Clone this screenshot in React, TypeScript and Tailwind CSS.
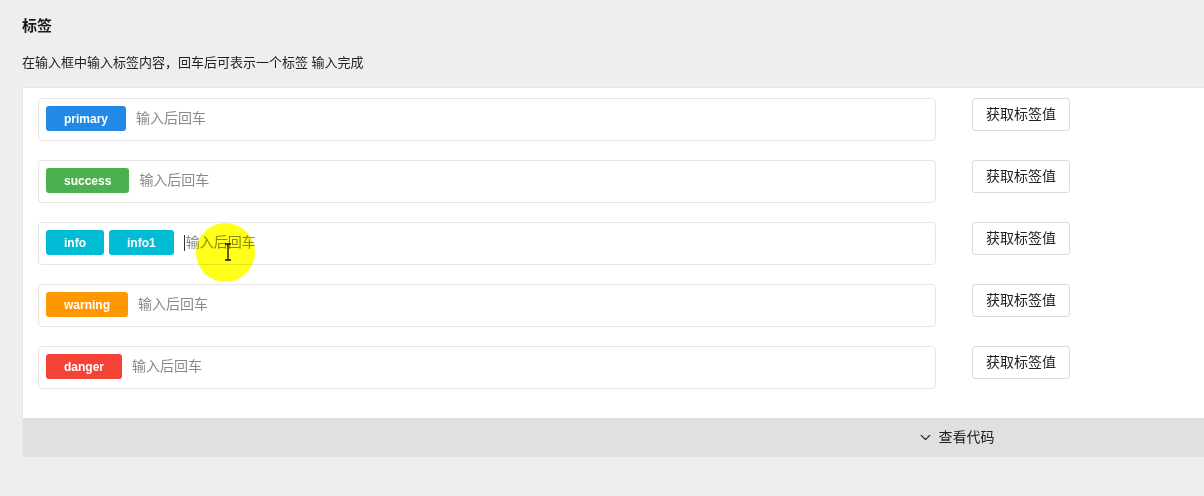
import { ChevronDown } from "lucide-react";

type Tag = { label: string; color: string };

const rows: Tag[][] = [
  [{ label: "primary", color: "bg-[#2389e6]" }],
  [{ label: "success", color: "bg-[#4caf50]" }],
  [
    { label: "info", color: "bg-[#00bcd4]" },
    { label: "info1", color: "bg-[#00bcd4]" },
  ],
  [{ label: "warning", color: "bg-[#ff9800]" }],
  [{ label: "danger", color: "bg-[#f44336]" }],
];

const font = { fontFamily: '"Liberation Sans", Arial, "Noto Sans CJK SC", sans-serif' };

function TagInput({ tags, caret }: { tags: Tag[]; caret?: boolean }) {
  return (
    <div className="flex h-[43px] w-[898px] items-center gap-[5px] rounded-[4px] border border-[#e6e6e6] bg-white pl-[7px] pb-[2px]">
      {tags.map((t) => (
        <span
          key={t.label}
          className={`${t.color} flex h-[25px] items-center rounded-[3px] px-[18px] text-[12px] font-bold text-white`}
        >
          {t.label}
        </span>
      ))}
      <span className="ml-[5px] flex items-center text-[14px] text-[#8a8a8a]">
        {caret && <span className="mr-px h-[16px] w-px bg-[#333]" />}
        输入后回车
      </span>
    </div>
  );
}

export default function App() {
  return (
    <div className="relative h-[496px] w-full overflow-hidden bg-[#eeeef0] text-[#222]" style={font}>
      <div className="pl-[22px] pt-[15px]">
        <h2 className="text-[15px] font-bold leading-[22px] text-[#1a1a1a]">标签</h2>
        <p className="mt-[16px] text-[13px] leading-[20px] text-[#222]">
          在输入框中输入标签内容，回车后可表示一个标签 输入完成
        </p>
        <div className="mt-[14px] w-[1866px] border-t border-l border-[#ebe4ea] bg-white">
          <div className="flex flex-col gap-[19px] pl-[15px] pt-[10px] pb-[29px]">
            {rows.map((tags, i) => (
              <div key={i} className="flex items-start gap-[36px]">
                <TagInput tags={tags} caret={i === 2} />
                <button className="h-[33px] w-[98px] rounded-[3px] border border-[#dcdcdc] bg-white text-[14px] text-[#222]">
                  获取标签值
                </button>
              </div>
            ))}
          </div>
          <div className="flex h-[39px] items-center justify-center gap-[5px] bg-[#e0e0e0] text-[14px] text-[#222]">
            <ChevronDown size={17} strokeWidth={1.8} />
            <span>查看代码</span>
          </div>
        </div>
      </div>
      {/* cursor highlight from the screen recording */}
      <div className="pointer-events-none absolute left-[196px] top-[223px] h-[59px] w-[59px] rounded-full bg-[#ffff00] opacity-90 mix-blend-multiply" />
      <svg
        className="pointer-events-none absolute left-[224px] top-[243px]"
        width="8"
        height="18"
        viewBox="0 0 8 18"
        fill="none"
        stroke="#111"
        strokeWidth="1.3"
      >
        <path d="M1 1 H7 M4 1 V17 M1 17 H7" />
      </svg>
    </div>
  );
}
